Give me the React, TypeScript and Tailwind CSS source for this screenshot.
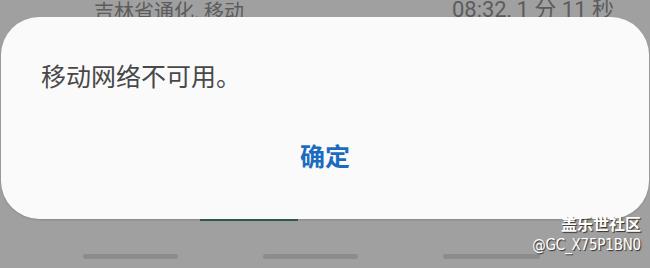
export default function App() {
  return (
    <div
      className="relative w-[650px] h-[268px] overflow-hidden bg-[#a0a0a0]"
      style={{ fontFamily: '"Noto Sans CJK SC", "Noto Sans", sans-serif' }}
    >
      <div className="flex h-[17px] items-end overflow-hidden leading-none text-[#5c5c5c]">
        <span className="ml-[94px] mb-[-4px] text-[20px]">吉林省通化, 移动</span>
        <span className="ml-auto mr-[36px] mb-[-4px] text-[22px]" style={{ fontFamily: '"Roboto", "Noto Sans CJK SC", sans-serif' }}>08:32, 1 分 11 秒</span>
      </div>
      <div className="mx-[1px] flex h-[202px] flex-col rounded-[38px] bg-[#fafafa] shadow-[0_1px_2px_rgba(0,0,0,0.15)]">
        <div className="pl-[40px] pt-[41px] text-[25px] leading-[34px] text-[#484848]">移动网络不可用。</div>
        <div className="mt-[46px] flex justify-center">
          <span className="text-[25px] font-bold leading-[34px] text-[#1b6cbf]">确定</span>
        </div>
      </div>
      <div className="flex">
        <div className="ml-[200px] h-[2px] w-[98px] bg-[#2f5a46]" />
      </div>
      <div className="mt-[33px] flex">
        <div className="ml-[83px] h-[5px] w-[95px] rounded-full bg-[#8c8c8c]" />
        <div className="ml-[85px] h-[5px] w-[95px] rounded-full bg-[#8c8c8c]" />
        <div className="ml-[85px] h-[5px] w-[97px] rounded-full bg-[#8c8c8c]" />
      </div>
      <div className="absolute right-[9px] top-[212px] flex flex-col items-end text-white [text-shadow:1px_1px_1px_rgba(0,0,0,0.7)]">
        <span className="text-[16px] font-bold leading-[22px]">盖乐世社区</span>
        <span className="text-[15px] leading-[22px] tracking-[-0.2px]" style={{ fontFamily: '"DejaVu Sans Condensed", "Liberation Sans", sans-serif' }}>@GC_X75P1BN0</span>
      </div>
    </div>
  );
}
